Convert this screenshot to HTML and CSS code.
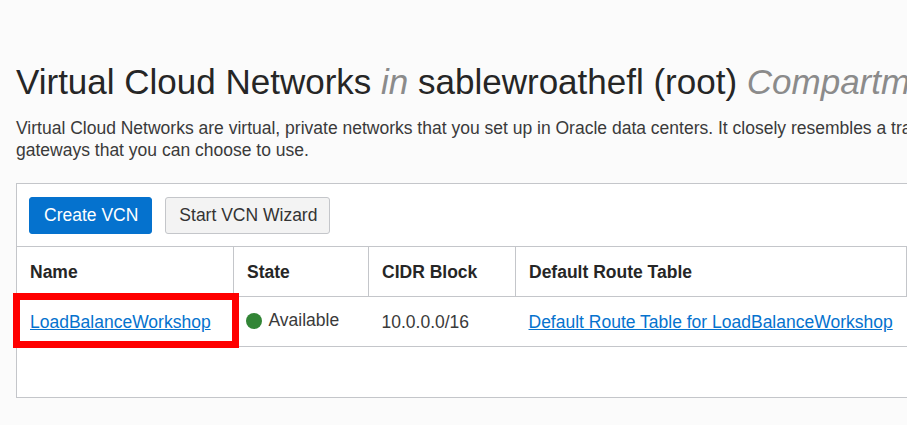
FILE: index.html
```html
<!DOCTYPE html>
<html lang="en">
<head>
<meta charset="utf-8">
<title>Virtual Cloud Networks</title>
<link rel="stylesheet" href="styles.css">
</head>
<body>
<main class="page">
  <h1 class="title">Virtual Cloud Networks <em class="muted">in</em> sablewroathefl (root) <em class="muted">Compartment</em></h1>
  <p class="intro">Virtual Cloud Networks are virtual, private networks that you set up in Oracle data centers. It closely resembles a traditional network, with firewall rules and specific types of communication<br>gateways that you can choose to use.</p>
  <section class="panel">
    <div class="toolbar">
      <button class="btn btn-primary" type="button">Create VCN</button>
      <button class="btn btn-default" type="button">Start VCN Wizard</button>
    </div>
    <table class="grid">
      <thead>
        <tr>
          <th class="c-name">Name</th>
          <th class="c-state">State</th>
          <th class="c-cidr">CIDR Block</th>
          <th class="c-route">Default Route Table</th>
          <th class="c-more">Compartment</th>
        </tr>
      </thead>
      <tbody>
        <tr>
          <td class="c-name"><a href="#">LoadBalanceWorkshop</a><span class="highlight"></span></td>
          <td class="c-state"><span class="status"><span class="dot"></span>Available</span></td>
          <td class="c-cidr">10.0.0.0/16</td>
          <td class="c-route"><a href="#">Default Route Table for LoadBalanceWorkshop</a></td>
          <td class="c-more">sablewroathefl</td>
        </tr>
      </tbody>
    </table>
    <div class="table-foot"></div>
  </section>
</main>
</body>
</html>
```
FILE: styles.css
```css
html, body {
  margin: 0;
  padding: 0;
  background: #fbfbfb;
  overflow: hidden;
}
body {
  font-family: "Liberation Sans", Arial, sans-serif;
  color: #333;
}
.page {
  padding: 62px 0 0 16px;
  width: 1600px;
}
.title {
  margin: 0;
  font-size: 35px;
  line-height: 40px;
  font-weight: normal;
  color: #262626;
  white-space: nowrap;
}
.muted {
  color: #8b8b8b;
}
.intro {
  margin: 16px 0 0 0;
  font-size: 17.5px;
  line-height: 21.5px;
  color: #3a3a3a;
  white-space: nowrap;
}
.panel {
  margin-top: 22px;
  background: #fff;
  border: 1px solid #c4c6ca;
  width: 1200px;
}
.toolbar {
  display: flex;
  gap: 13px;
  padding: 13px 12px 12px;
}
.btn {
  font-family: "Liberation Sans", Arial, sans-serif;
  font-size: 17.5px;
  height: 37px;
  padding: 0 13px 0 14px;
  border-radius: 3px;
  cursor: pointer;
}
.btn-primary {
  background: #0572ce;
  border: 1px solid #0572ce;
  color: #fff;
}
.btn-default {
  background: #f3f3f3;
  border: 1px solid #c4c6ca;
  color: #333;
  padding: 0 12px 0 13px;
}
.grid {
  border-collapse: collapse;
  table-layout: fixed;
  width: 1198px;
  font-size: 17.5px;
}
.grid th, .grid td {
  text-align: left;
  padding: 1px 13px 0;
  height: 48px;
  white-space: nowrap;
}
.grid th {
  font-weight: bold;
  color: #262626;
  border-top: 1px solid #c4c6ca;
  border-bottom: 1px solid #c4c6ca;
  border-left: 1px solid #c4c6ca;
}
.grid th:first-child {
  border-left: none;
}
.grid td {
  border-bottom: 1px solid #c4c6ca;
  color: #3a3a3a;
}
.c-name { width: 190px; }
.c-state { width: 108px; }
.c-cidr { width: 120px; }
.c-route { width: 364px; }
.grid a {
  color: #0572ce;
  text-decoration: underline;
}
td.c-name {
  position: relative;
}
.highlight {
  position: absolute;
  left: -4px;
  top: -4px;
  right: -5px;
  bottom: -2px;
  border: 7px solid #ff0000;
}
.status {
  display: inline-flex;
  align-items: center;
  gap: 7px;
  margin-left: -1px;
}
.dot {
  width: 16px;
  height: 16px;
  border-radius: 50%;
  background: #328536;
}
.table-foot {
  height: 50px;
}
```
